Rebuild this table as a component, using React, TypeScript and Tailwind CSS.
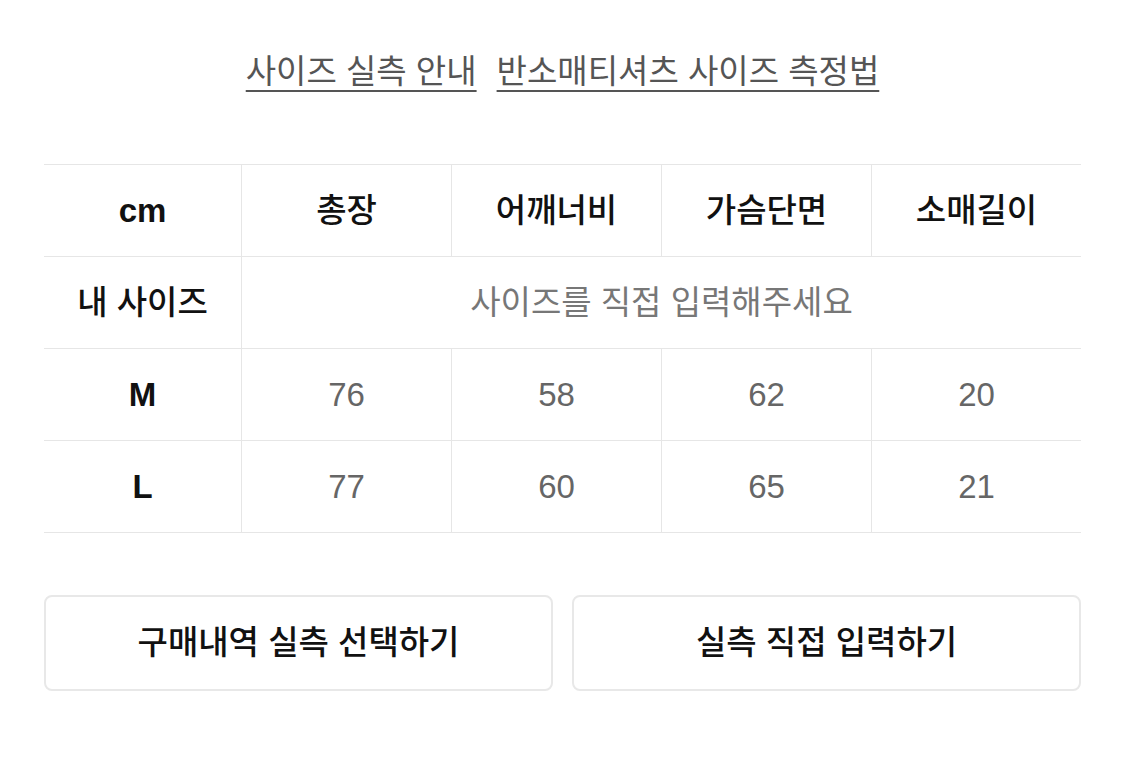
const COLS = ['총장', '어깨너비', '가슴단면', '소매길이']

const ROWS = [
  { size: 'M', values: ['76', '58', '62', '20'] },
  { size: 'L', values: ['77', '60', '65', '21'] },
]

const font = { fontFamily: '"Liberation Sans", "Noto Sans CJK KR", sans-serif' }

export default function App() {
  return (
    <div className="min-h-screen bg-white px-[44px]" style={font}>
      {/* 안내 링크 */}
      <div className="flex justify-center gap-[20px] pt-[50px] text-[33px] leading-[44px] text-[#555]">
        <a className="underline decoration-[2px] underline-offset-[7px] decoration-[#555]">사이즈 실측 안내</a>
        <a className="underline decoration-[2px] underline-offset-[7px] decoration-[#555]">반소매티셔츠 사이즈 측정법</a>
      </div>

      {/* 실측 테이블 */}
      <div className="mt-[70px] border-t border-[#e6e6e6] text-[33px]">
        <div className="grid h-[92px] grid-cols-[197px_1fr_1fr_1fr_1fr] border-b border-[#e6e6e6]">
          <div className="flex items-center justify-center font-bold text-[#111]">cm</div>
          {COLS.map(c => (
            <div key={c} className="flex items-center justify-center border-l border-[#e6e6e6] font-medium text-[#111]">
              {c}
            </div>
          ))}
        </div>
        <div className="grid h-[92px] grid-cols-[197px_1fr] border-b border-[#e6e6e6]">
          <div className="flex items-center justify-center font-medium text-[#111]">내 사이즈</div>
          <div className="flex items-center justify-center border-l border-[#e6e6e6] text-[#777]">사이즈를 직접 입력해주세요</div>
        </div>
        {ROWS.map(row => (
          <div key={row.size} className="grid h-[92px] grid-cols-[197px_1fr_1fr_1fr_1fr] border-b border-[#e6e6e6]">
            <div className="flex items-center justify-center font-bold text-[#111]">{row.size}</div>
            {row.values.map((v, i) => (
              <div key={i} className="flex items-center justify-center border-l border-[#e6e6e6] text-[#666]">
                {v}
              </div>
            ))}
          </div>
        ))}
      </div>

      {/* 버튼 */}
      <div className="mt-[62px] grid grid-cols-2 gap-[19px]">
        <button type="button" className="h-[96px] rounded-[8px] border-2 border-[#e8e8e8] text-[33px] font-medium text-[#111]">
          구매내역 실측 선택하기
        </button>
        <button type="button" className="h-[96px] rounded-[8px] border-2 border-[#e8e8e8] text-[33px] font-medium text-[#111]">
          실측 직접 입력하기
        </button>
      </div>
    </div>
  )
}
